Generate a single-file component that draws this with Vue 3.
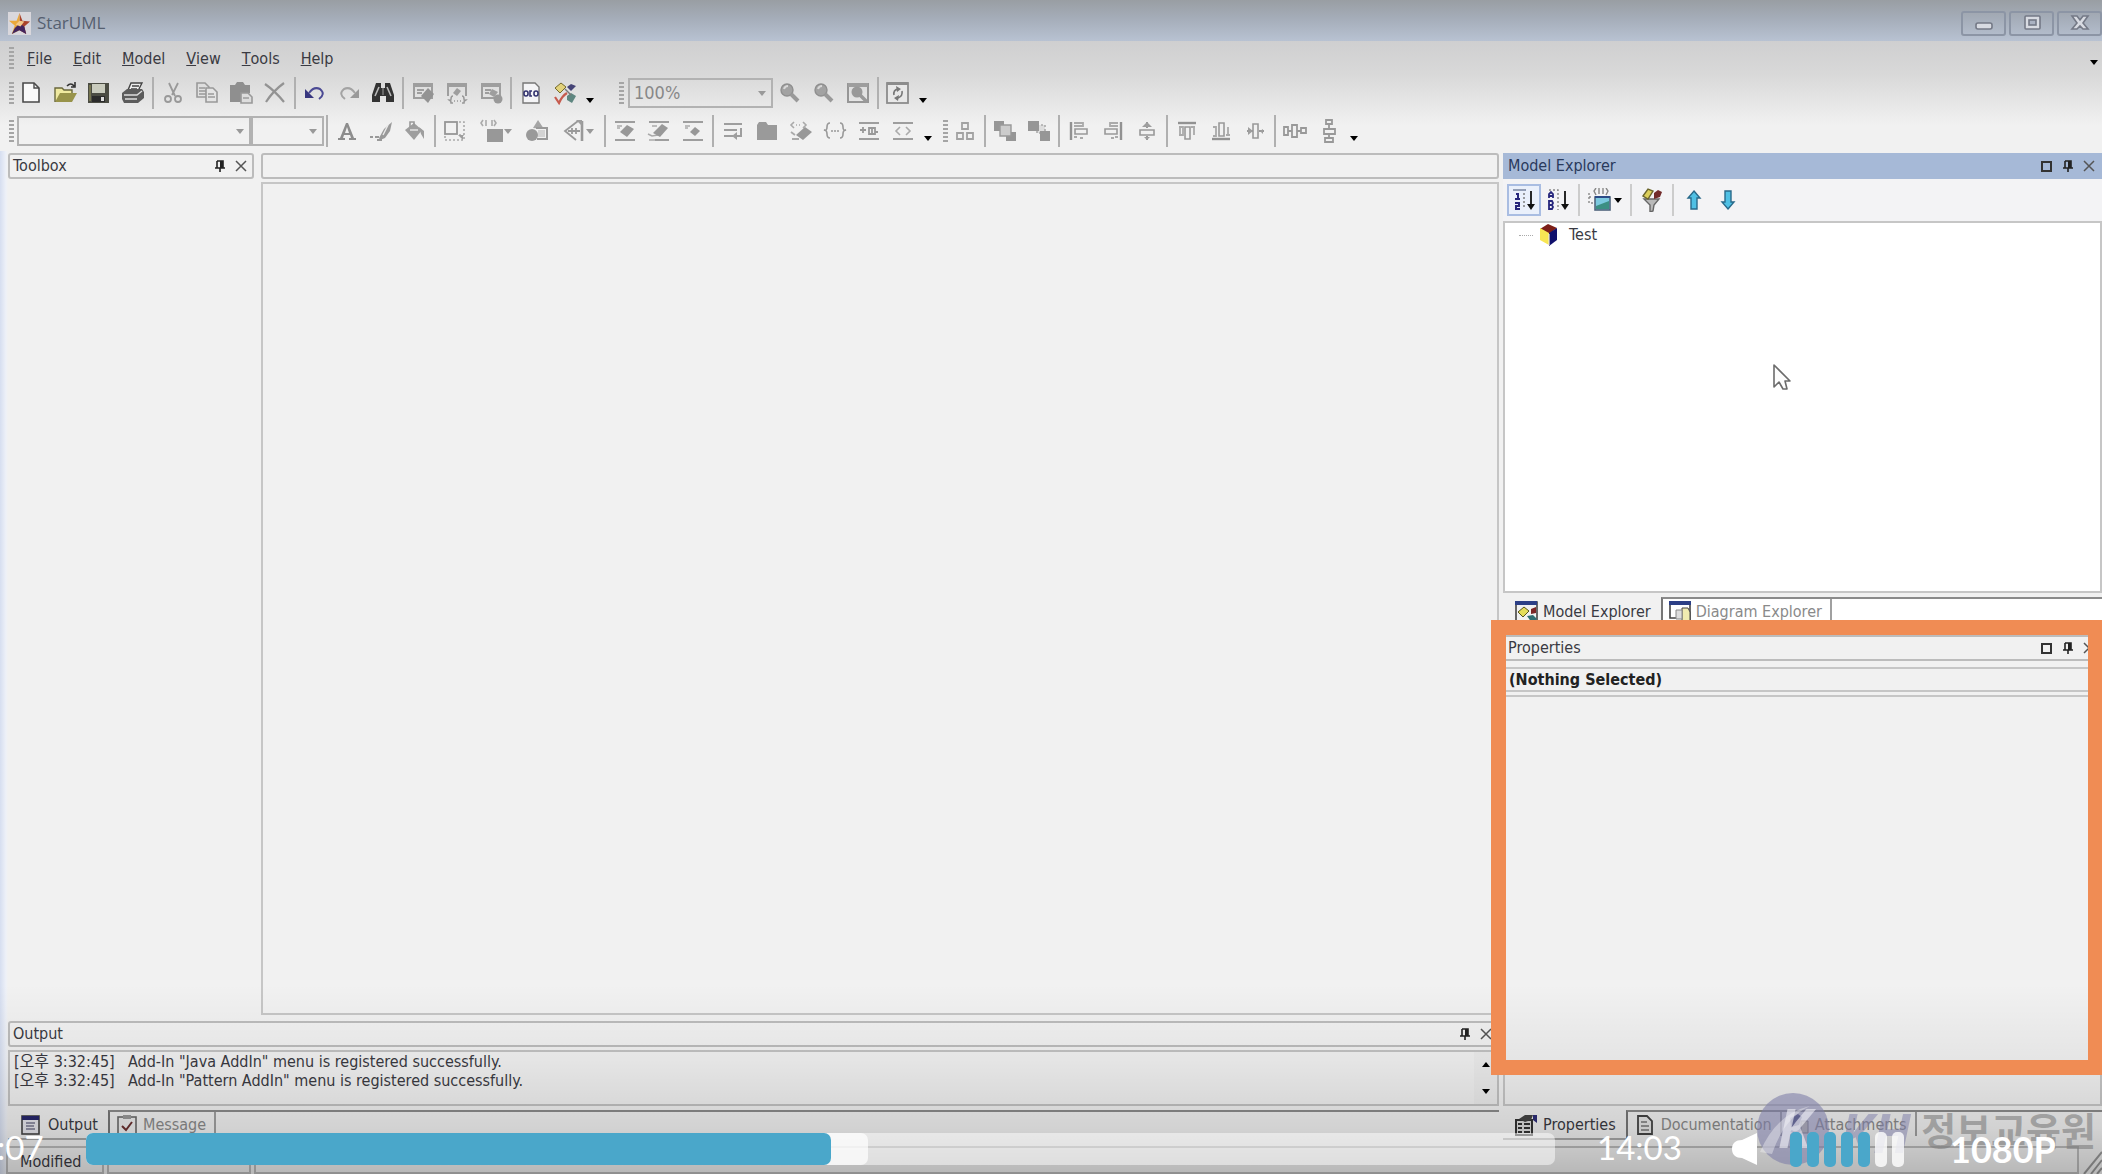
<template>
  <div class="app">
    <header class="chrome">
      <div class="titlebar">
        <svg class="logo" viewBox="0 0 24 24">
          <rect width="24" height="24" fill="#d9d7dc" />
          <path d="M12 1l3 8 8 1-6 5 2 8-7-4z" fill="#a9432c" />
          <path d="M12 1l-3 8-8 0 6 5-3 9 8-4z" fill="#eaa93b" />
          <path d="M12 12l5 3 2 8-7-4-8 4 3-6z" fill="#43265e" />
          <path d="M12 9l5 1-4 5-5-2z" fill="#f2c98a" />
        </svg>
        <h1>StarUML</h1>
        <div class="window-buttons">
          <button v-for="name in ['minimize', 'restore', 'exit']" :key="name" :aria-label="name">
            <svg class="icon" viewBox="0 0 24 24" v-html="icons[name]" />
          </button>
        </div>
      </div>

      <nav class="menubar">
        <i class="handle" />
        <button v-for="item in menus" :key="item"><u>{{ item[0] }}</u>{{ item.slice(1) }}</button>
        <button class="more" aria-label="Menu options">
          <svg class="caret" viewBox="0 0 10 6"><path d="M0 0h10L5 6z" /></svg>
        </button>
      </nav>

      <div v-for="(bar, row) in toolbars" :key="row" class="toolbar" :class="'row-' + row">
        <template v-for="(item, index) in bar" :key="index">
          <i v-if="item === '#'" class="handle" />
          <i v-else-if="item === '|'" class="separator" />
          <button v-else-if="item === 'v'" class="more" aria-label="More buttons">
            <svg class="caret" viewBox="0 0 10 6"><path d="M0 0h10L5 6z" /></svg>
          </button>
          <span v-else-if="item.combo" class="combo" :class="item.combo">
            <select :aria-label="item.combo">
              <option>{{ item.value }}</option>
            </select>
            <svg class="caret" viewBox="0 0 10 6"><path d="M0 0h10L5 6z" /></svg>
          </span>
          <button v-else class="tool" :class="{ drop: item.endsWith('+') }" :aria-label="item.replace('+', '')">
            <svg class="icon" viewBox="0 0 24 24" v-html="icons[item.replace('+', '')]" />
            <svg v-if="item.endsWith('+')" class="caret" viewBox="0 0 10 6"><path d="M0 0h10L5 6z" /></svg>
          </button>
        </template>
      </div>
    </header>

    <main class="workspace">
      <div class="left">
        <div class="editor">
          <aside class="toolbox">
            <div class="panel-head">
              <h2>Toolbox</h2>
              <button aria-label="Pin"><svg class="mini" viewBox="0 0 14 14" v-html="icons.pin" /></button>
              <button aria-label="Close"><svg class="mini" viewBox="0 0 14 14" v-html="icons.close" /></button>
            </div>
          </aside>
          <section class="document">
            <div class="panel-head" />
            <div class="canvas" />
          </section>
        </div>

        <section class="output">
          <div class="panel-head">
            <h2>Output</h2>
            <button aria-label="Pin"><svg class="mini" viewBox="0 0 14 14" v-html="icons.pin" /></button>
            <button aria-label="Close"><svg class="mini" viewBox="0 0 14 14" v-html="icons.close" /></button>
          </div>
          <div class="log">
            <ul>
              <li v-for="line in log" :key="line"><time>[오후 3:32:45]</time>{{ line }}</li>
            </ul>
            <div class="scroll">
              <button aria-label="Scroll up"><svg class="caret" viewBox="0 0 10 6"><path d="M0 6h10L5 0z" /></svg></button>
              <button aria-label="Scroll down"><svg class="caret" viewBox="0 0 10 6"><path d="M0 0h10L5 6z" /></svg></button>
            </div>
          </div>
          <div class="tabs">
            <button class="tab active"><svg class="icon" viewBox="0 0 24 24" v-html="icons.output" />Output</button>
            <div class="rest">
              <button class="tab"><svg class="icon" viewBox="0 0 24 24" v-html="icons.message" />Message</button>
            </div>
          </div>
        </section>
      </div>

      <div class="right">
        <section class="explorer">
          <div class="panel-head focused">
            <h2>Model Explorer</h2>
            <button aria-label="Maximize"><svg class="mini" viewBox="0 0 14 14" v-html="icons.square" /></button>
            <button aria-label="Pin"><svg class="mini" viewBox="0 0 14 14" v-html="icons.pin" /></button>
            <button aria-label="Close"><svg class="mini" viewBox="0 0 14 14" v-html="icons.close" /></button>
          </div>
          <div class="tree-tools">
            <template v-for="(item, index) in treeTools" :key="index">
              <i v-if="item === '|'" class="separator" />
              <button v-else class="tool" :class="{ pressed: item === 'sortNumber', drop: item.endsWith('+') }" :aria-label="item.replace('+', '')">
                <svg class="icon" viewBox="0 0 24 24" v-html="icons[item.replace('+', '')]" />
                <svg v-if="item.endsWith('+')" class="caret" viewBox="0 0 10 6"><path d="M0 0h10L5 6z" /></svg>
              </button>
            </template>
          </div>
          <div class="tree">
            <div class="node">
              <i class="branch" />
              <svg class="icon" viewBox="0 0 24 24" v-html="icons.cube" />
              <span>Test</span>
            </div>
            <svg class="cursor" viewBox="0 0 18 28">
              <path d="M1 2v22l5-5 4 7h4l-2-8h5z" fill="#fdfdfd" stroke="#6c6c6c" stroke-width="1.6" stroke-linejoin="round" />
            </svg>
          </div>
          <div class="tabs">
            <button class="tab active"><svg class="icon" viewBox="0 0 24 24" v-html="icons.modelTab" />Model Explorer</button>
            <div class="rest">
              <button class="tab"><svg class="icon" viewBox="0 0 24 24" v-html="icons.diagramTab" />Diagram Explorer</button>
            </div>
          </div>
        </section>

        <section class="properties">
          <div class="panel-head">
            <h2>Properties</h2>
            <button aria-label="Maximize"><svg class="mini" viewBox="0 0 14 14" v-html="icons.square" /></button>
            <button aria-label="Pin"><svg class="mini" viewBox="0 0 14 14" v-html="icons.pin" /></button>
            <button aria-label="Close"><svg class="mini" viewBox="0 0 14 14" v-html="icons.close" /></button>
          </div>
          <p class="selection">(Nothing Selected)</p>
          <div class="grid" />
          <div class="tabs">
            <button class="tab active"><svg class="icon" viewBox="0 0 24 24" v-html="icons.propertiesTab" />Properties</button>
            <div class="rest">
              <button class="tab"><svg class="icon" viewBox="0 0 24 24" v-html="icons.documentTab" />Documentation</button>
              <button class="tab"><svg class="icon" viewBox="0 0 24 24" v-html="icons.attachTab" />Attachments</button>
            </div>
          </div>
          <div class="highlight" />
        </section>
      </div>
    </main>

    <footer class="statusbar">
      <span class="cell state">Modified</span>
      <span class="cell" />
      <span class="cell wide" />
      <svg class="grip" viewBox="0 0 20 28"><path d="M2 28L20 6M9 28L20 14M15 28L20 22" stroke="#999" stroke-width="2" /></svg>
    </footer>

    <div class="shade" />

    <div class="watermark">
      <svg viewBox="0 0 160 78">
        <circle cx="37" cy="39" r="36" fill="#7f7fa8" fill-opacity=".6" />
        <path d="M4 62q16-38 50-46-26 12-38 48z" fill="#f4f4f8" fill-opacity=".4" />
        <text x="22" y="58" class="mark white">K</text>
        <text x="84" y="63" class="mark">KH</text>
      </svg>
      <span>정보교육원</span>
    </div>

    <div class="player">
      <span class="elapsed">:07</span>
      <div class="seek">
        <i class="buffered" :style="{ width: buffered + '%' }" />
        <i class="played" :style="{ width: played + '%' }" />
        <input v-model="played" type="range" min="0" max="100" step="0.1" aria-label="Seek">
      </div>
      <span class="total">14:03</span>
      <button class="mute" aria-label="Mute">
        <svg viewBox="0 0 26 34"><path d="M10 8L25 1v32L10 26C4 26 0 23 0 17s4-9 10-9z" fill="#fff" /></svg>
      </button>
      <div class="volume">
        <button v-for="n in 7" :key="n" :class="{ on: n <= volume }" :aria-label="'Volume ' + n" @click="volume = n" />
      </div>
      <button class="quality">1080P</button>
    </div>
  </div>
</template>

<script setup>
import { ref } from 'vue'

const played = ref(50.7)
const buffered = 53.2
const volume = ref(5)

const menus = ['File', 'Edit', 'Model', 'View', 'Tools', 'Help']

// '#' is a drag handle, '|' a separator, 'v' the overflow arrow, a trailing '+' a drop-down
const toolbars = [
  [
    '#', 'new', 'open', 'save', 'print', '|', 'cut', 'copy', 'paste', 'delete', '|',
    'undo', 'redo', 'find', '|', 'selectModel', 'selectBrackets', 'selectDiagram', '|',
    'ocl', 'verify', 'v', '#', { combo: 'zoom', value: '100%' },
    'zoomIn', 'zoomOut', 'fit', '|', 'refresh', 'v',
  ],
  [
    '#', { combo: 'font', value: '' }, { combo: 'size', value: '' }, '|',
    'fontColor', 'lineColor', 'fill', '|', 'autoSize', 'stereotype+', 'shapes', 'lineStyle+', '|',
    'attributes', 'operations', 'literals', '|',
    'wrap', 'folder', 'signature', 'braces', 'visibility', 'namespace', 'v', '#',
    'layout', '|', 'front', 'back', '|', 'alignLeft', 'alignRight', 'alignCenter', '|',
    'alignTop', 'alignBottom', 'alignMiddle', '|', 'spaceH', 'spaceV', 'v',
  ],
]

const treeTools = ['sortNumber', 'sortName', '|', 'treeView+', '|', 'filter', '|', 'up', 'down']

const log = [
  'Add-In "Java AddIn" menu is registered successfully.',
  'Add-In "Pattern AddIn" menu is registered successfully.',
]

const line = (d, color = '#9e9e9e', width = 2) =>
  `<path d="${d}" fill="none" stroke="${color}" stroke-width="${width}"/>`
const solid = (d, color = '#9e9e9e') => `<path d="${d}" fill="${color}"/>`

const lens = '<circle cx="9" cy="9" r="6" fill="#a2a2a2" stroke="#8f8f8f" stroke-width="1.4"/>' + line('M13 13l7 7', '#999', 4) + line('M6 8q1-3 4-3', '#d8d8d8')
const frame = solid('M2 2h20v4H2z') + line('M3 3v14h18V3')

const icons = {
  minimize: '<rect x="4" y="12" width="16" height="6" rx="2" fill="#d8dbe2" stroke="#747986" stroke-width="1.6"/>',
  restore: '<rect x="5" y="5" width="15" height="13" rx="1" fill="#d8dbe2" stroke="#747986" stroke-width="1.6"/><rect x="9" y="9" width="7" height="5" fill="#aab2c2" stroke="#747986" stroke-width="1.6"/>',
  exit: '<path d="M4 5h5l3 4 3-4h5l-5 7 5 6h-5l-3-3-3 3H4l5-6z" fill="#d8dbe2" stroke="#747986" stroke-width="1.6"/>',
  new: '<path d="M4 2h11l5 5v14H4z" fill="#fafafa" stroke="#4a4a4a" stroke-width="1.6"/>' + line('M15 2v5h5', '#4a4a4a', 1.4),
  open: solid('M2 7h7l2 2h8v4H9L2 21z', '#efe9a0') + solid('M7 12h17l-5 9H2z', '#98934a') + line('M2 21V7h7l2 2h8v3', '#69673c', 1.4) + line('M14 5q4-4 7 0M22 1v5h-4', '#333', 1.6),
  save: solid('M1 2h21v20H1z', '#4b4c43') + solid('M5 3h13v9H5z', '#c9cbbd') + solid('M5 15h13v6H5z', '#2b2b2b') + solid('M14 16h3v4h-3z', '#ddd') + line('M3 4v16', '#838254', 1.5),
  print: solid('M7 8L10 2h12l-4 8z', '#eee') + line('M7 9l3-7h11l-4 8M11 5h7M10 8h6', '#444', 1.4) + solid('M1 12l5-4h15l2 3v6l-6 5H3l-2-4z', '#5c5c5c') + line('M3 14h13l5-4M4 18h12', '#ddd', 1.4),
  cut: line('M8 2l6 13M17 2l-6 12', '#999', 1.8) + '<circle cx="7" cy="18" r="3" fill="none" stroke="#999" stroke-width="1.8"/><circle cx="17" cy="18" r="3" fill="none" stroke="#999" stroke-width="1.8"/>',
  copy: line('M2 2h8l4 4v10H2zM4 7h6M4 10h8M4 13h8', '#999', 1.6) + '<path d="M11 7h7l4 4v10H11z" fill="#e4e4e4" stroke="#999" stroke-width="1.6"/>' + line('M13 13h6M13 16h7', '#999', 1.4),
  paste: solid('M1 4h5l2-3h6l2 3h5v8h-9v9H1z', '#8f8f8f') + '<path d="M12 12h7l4 4v6H12z" fill="#ddd" stroke="#999" stroke-width="1.6"/>' + line('M14 17h6', '#999', 1.4),
  delete: line('M2 3Q12 10 21 21M21 2Q10 10 3 21', '#939393', 2.2),
  undo: line('M6 12q5-7 11-4 6 5-1 10', '#4b4a94', 2) + solid('M2 8v9h9z', '#38377f'),
  redo: line('M18 12q-5-7-11-4-6 5 1 10', '#a3a3a3', 2) + solid('M22 8v9h-9z', '#999'),
  find: solid('M5 2h5v5h4V2h5l4 12v7h-8v-6H9v6H1v-7z', '#333') + line('M8 6L4 15M16 6l4 9', '#bbb', 1.6) + line('M12 7v7', '#777', 1.6),
  selectModel: frame + line('M6 9h7M6 12h5') + solid('M17 7l6 6-6 9-7-7z', '#939393'),
  selectBrackets: solid('M2 2h20v4H2z') + line('M3 3v12M21 3v12') + solid('M12 7l4 3-4 5-4-3z') + line('M8 15q-2 0-2 3t-2 1q2 0 2 3h2M17 15q2 0 2 3t2 1q-2 0-2 3h-2M9 20h1M12 20h1M15 20h1', '#999', 1.5),
  selectDiagram: frame + line('M6 9h6M6 12h4') + solid('M13 8l6 3-4 5-5-3z') + '<circle cx="19" cy="18" r="4.5" fill="#999"/>',
  ocl: '<path d="M4 2h12l4 4v16H4z" fill="#f4f4f6" stroke="#777" stroke-width="1.4"/><rect x="5" y="10" width="4" height="5" rx="2" fill="none" stroke="#33336f" stroke-width="1.6"/><rect x="15" y="10" width="4" height="5" rx="2" fill="none" stroke="#33336f" stroke-width="1.6"/>' + line('M13 10h-2v5h2', '#33336f', 1.6),
  verify: '<path d="M2 7l6-5 5 4-6 6z" fill="#e2d27b" stroke="#74692b"/>' + solid('M14 6l4-3 5 2-5 5z', '#454476') + solid('M14 15l4-3 5 3-4 7-5-3z', '#5e8680') + line('M2 16l4 6q3-7 8-10', '#c65b4e', 2.2) + line('M12 8l6 6', '#777', 1.4),
  zoomIn: lens,
  zoomOut: lens,
  fit: '<rect x="2" y="3" width="20" height="18" fill="none" stroke="#969696" stroke-width="2"/>' + solid('M2 2h20v4H2z') + '<circle cx="11" cy="11" r="5.5" fill="#999"/>' + line('M14 14l7 7', '#999', 3.5),
  refresh: '<rect x="1" y="2" width="21" height="20" fill="#e8e8e8" stroke="#8c8c8c" stroke-width="1.8"/>' + solid('M1 1h21v3H1z', '#8c8c8c') + line('M8 14q-1-5 4-6M16 10q1 5-4 7', '#777', 1.6) + solid('M10 5l5 3-4 3zM13 14l-5 3 4 3z', '#777'),
  fontColor: solid('M3 21v-2h2L11 4h2l6 15h2v2h-7v-2h2l-1-3H9l-1 3h2v2zM10 14h4l-2-6z', '#8d8d8d'),
  lineColor: solid('M10 19l5-9 8-7-2 9-5 7-5 2z', '#999') + line('M19 6l-5 10', '#e9e9e9', 1.4) + line('M1 18h3M6 18h4M8 21h5', '#999', 2),
  fill: solid('M2 11l9-7 8 7-8 10z') + line('M7 8V3h4v4', '#999', 1.6) + solid('M16 8l5 4v8l-3-5z') + line('M7 11h8', '#e8e8e8', 1.4),
  autoSize: '<rect x="2" y="3" width="12" height="12" fill="none" stroke="#969696" stroke-width="1.8"/><path d="M16 3h5v18H2v-4M16 16h5" fill="none" stroke="#aaa" stroke-width="1.6" stroke-dasharray="2 2"/>' + solid('M15 16h5v5z'),
  stereotype: solid('M7 10h16v13H7z', '#989898') + line('M3 1L1 4l2 3M6 1v6M12 1v6M14 1l2 3-2 3', '#aaa', 1.6),
  shapes: solid('M8 9l5-8 6 9z', '#a5a5a5') + line('M11 9h11v11H12', '#999', 2) + solid('M13 11h7v7h-7z', '#d3d3d3') + '<circle cx="7" cy="16" r="6" fill="#999"/>',
  lineStyle: line('M16 2L3 12l11 9', '#999', 1.8) + line('M20 2v20', '#999', 2.6) + line('M6 12h12M10 9v6M14 9v6', '#999', 1.8) + solid('M14 1h6v6z'),
  attributes: line('M2 3h20M2 21h20') + line('M4 7h5M4 9h3', '#aaa', 1.4) + solid('M14 6l7 4-7 8-7-5z', '#989898'),
  operations: line('M2 3h20M8 21h14') + line('M5 7h5M1 15l4 2 6-1M2 21h6', '#aaa', 1.6) + solid('M15 5l6 4-8 9-7-4z', '#989898'),
  literals: line('M2 3h20M2 21h20') + line('M4 7h5M4 9h3', '#aaa', 1.4) + solid('M14 8l5 4-5 5-5-4z', '#989898'),
  wrap: line('M3 5h18M3 11h13M3 17h9M20 9v8h-5') + solid('M16 13v8l-5-4z'),
  folder: solid('M2 6l2-3h7l2 3h9v15H2z', '#9a9a9a'),
  signature: line('M5 3L2 6l3 3M14 3l3 3-3 3M7 6h1M10 6h1', '#aaa', 1.6) + solid('M16 8l7 5-9 8-7-5z', '#989898') + line('M2 13l4 3M3 20h7', '#aaa', 1.8),
  braces: line('M7 4q-3 0-3 4t-3 3q3 0 3 4t3 4M17 4q3 0 3 4t3 3q-3 0-3 4t-3 4M8 12h2M11 12h2M14 12h2', '#999', 1.6),
  visibility: line('M2 4h20M2 20h20') + line('M3 11h6M6 8v6M12 9h6v6h-6zM15 8v8M18 13h3', '#999', 1.8),
  namespace: line('M2 4h20M2 20h20') + line('M9 8l-4 4 4 4M15 8l4 4-4 4', '#aaa', 1.6),
  layout: line('M9 4h6v6H9zM4 14h6v6H4zM14 14h6v6h-6z', '#a2a2a2', 1.8),
  front: solid('M1 2h10v10H1zM13 13h10v9H13z', '#969696') + '<path d="M7 6h11v11H7z" fill="#ccc" stroke="#999" stroke-width="1.4"/>',
  back: '<path d="M10 6h8v8h-8z" fill="#ddd" stroke="#aaa" stroke-width="1.6" stroke-dasharray="2 2"/>' + solid('M1 2h11v10H1zM13 12h10v10H13z', '#969696'),
  alignLeft: line('M4 3v18', '#929292', 2.4) + line('M7 4h9v3H7M7 18h3M13 19h3', '#aaa', 1.8) + line('M8 10h12v5H8z', '#999', 1.6),
  alignRight: line('M20 3v18', '#929292', 2.4) + line('M17 4H9v3h8M17 18h-3M13 19h-3', '#aaa', 1.8) + line('M16 10H4v5h12z', '#999', 1.6),
  alignCenter: line('M12 3v6M12 17v4', '#999', 2) + solid('M7 8l5-5 5 5z') + solid('M9 18h6l-3 3z') + line('M5 11h14v5H5z', '#999', 1.6),
  alignTop: line('M3 4h18', '#929292', 2.4) + line('M5 8v8M4 8h4v8H4M19 8v8M16 8h4', '#aaa', 1.8) + line('M10 8h5v12h-5z', '#999', 1.6),
  alignBottom: line('M3 20h18', '#929292', 2.4) + line('M4 8h3v9H4M19 8v8M17 16h4', '#aaa', 1.8) + line('M10 4h5v13h-5z', '#999', 1.6),
  alignMiddle: line('M4 12h6M16 12h5', '#999', 2) + solid('M5 8l5 4-5 4zM20 10v5l-3-3z') + line('M10 5h5v14h-5z', '#999', 1.6),
  spaceH: line('M1 8h4v8H1zM9 6h5v12H9zM18 9h5v5h-5zM5 12h4M14 12h4', '#999', 1.8),
  spaceV: line('M9 1h6v4H9zM7 10h11v5H7zM8 19h8v4H8zM12 5v5M12 15v4', '#999', 1.8),
  pin: line('M4 2h6v7M4 2v7M2 9h10M7 9v4', '#222', 1.6) + solid('M7 2h3v7H7z', '#222'),
  close: line('M2 2l10 10M12 2L2 12', '#555', 1.5),
  square: line('M2 3h9v9H2z', '#333', 2),
  output: '<rect x="3" y="3" width="17" height="18" fill="#e6e6ec" stroke="#444" stroke-width="1.6"/>' + solid('M3 3h17v4H3z', '#28286c') + line('M7 10h9M7 13h8M7 16h9', '#77778f', 1.4),
  message: '<rect x="3" y="4" width="18" height="18" fill="#ededed" stroke="#6a6a6a" stroke-width="1.6"/>' + solid('M8 2h8v4H8z', '#999') + line('M7 13l4 4 6-8', '#6b3030', 2),
  sortNumber: line('M1 2h13', '#6f7b98', 1.4) + line('M4 6h2v5M3 11h5M3 15h4v3H4v3h4', '#26267c', 2) + '<path d="M12 5v16" stroke="#777" stroke-width="1.4" stroke-dasharray="2 2"/>' + line('M19 3v14', '#111', 1.8) + solid('M15 16h8l-4 6z', '#111'),
  sortName: line('M3 10V6l2-2 2 2v4M3 8h4M3 13h3l1 2-1 2H3zM3 17h3l1 2-1 2H3v-7', '#26267c', 1.8) + '<path d="M3 2h9v20" fill="none" stroke="#888" stroke-width="1.4" stroke-dasharray="2 2"/>' + line('M19 3v14', '#111', 1.8) + solid('M15 16h8l-4 6z', '#111'),
  treeView: '<path d="M1 5v10h5M1 9h4" fill="none" stroke="#888" stroke-width="1.4" stroke-dasharray="2 2"/>' + line('M8 0L6 3l2 4M11 0v6M15 0v6M18 0l2 3-2 4', '#888', 1.4) + '<rect x="7" y="9" width="15" height="13" fill="#7cc9df" stroke="#51657d" stroke-width="1.6"/>' + solid('M8 18l13-5v8H8z', '#3c8f83') + line('M7 9h15', '#2c4a86', 2),
  filter: '<path d="M4 11h15l-5 6-1 6-3 1v-7z" fill="#b9b9b9" stroke="#666" stroke-width="1.4"/><path d="M3 8l5-7 5 2-5 8z" fill="#dccf5b" stroke="#6b652b" stroke-width="1.4"/>' + solid('M14 5l4-3 4 2-2 5-6 2z', '#722b2b'),
  up: '<path d="M12 3l6 7h-3v11H9V10H6z" fill="#4fc0e4" stroke="#28698a" stroke-width="1.4"/>',
  down: '<path d="M12 21l6-7h-3V3H9v11H6z" fill="#4fc0e4" stroke="#28698a" stroke-width="1.4"/>',
  cube: solid('M11 1l9 4-8 6-9-5z', '#7c1e17') + solid('M3 5l9 5v12l-9-5z', '#f8e653') + solid('M12 10l8-5v12l-8 6z', '#10106c') + line('M12 11v11', '#efe9d2', 1.2),
  modelTab: line('M1 2h22v19H2V3', '#444', 1.6) + solid('M1 1h22v4H1z', '#2c3f86') + '<path d="M4 12l6-5 5 4-6 6z" fill="#e5dd5a" stroke="#55531f"/>' + solid('M17 9l5-2v6l-5 1z', '#7b2525') + solid('M13 16l6-1 4 4-5 4z', '#2f6d72'),
  diagramTab: line('M2 2h20v20M2 2v16h8', '#444', 1.6) + solid('M1 1h22v4H1z', '#2c3f86') + '<path d="M14 8h6l2 4v9h-8z" fill="#f0ebb0" stroke="#444"/><path d="M8 10h6v9H8z" fill="#ddd" stroke="#888"/>',
  propertiesTab: '<rect x="2" y="7" width="16" height="15" fill="#ddd" stroke="#333" stroke-width="2"/>' + line('M4 11h4M10 11h6M4 15h4M10 15h6M4 19h4M10 19h6', '#333', 1.8) + solid('M5 6l6-4h8l-2 5-6 2z', '#444') + solid('M19 2h4v8l-4-3z', '#2e2e78'),
  documentTab: '<path d="M5 3h9l5 5v13H5z" fill="#e6e6e6" stroke="#444" stroke-width="1.8"/>' + line('M8 9h6M8 13h8M8 17h8', '#777', 1.4),
  attachTab: solid('M3 5l8-4 4 3-3 8-8 2z', '#46467c') + line('M6 12q0-8 7-8M4 18q6 4 11-3', '#333c70', 2.4) + '<path d="M14 8h7v12h-7z" fill="#d6d2b8" stroke="#777"/>',
}
</script>

<style>
body {
  background: #f1f1f1;
}
</style>

<style scoped>
.app {
  position: relative;
  display: flex;
  flex-direction: column;
  min-height: 100vh;
  overflow: hidden;
  background: linear-gradient(90deg, #d6def0 0, #eef1f8 6px, #f1f1f1 8px);
  font-family: 'DejaVu Sans Condensed', 'Noto Sans CJK KR', sans-serif;
  font-size: 16px;
  line-height: 20px;
  color: #3a3a42;
}

button {
  display: flex;
  align-items: center;
  justify-content: center;
  padding: 0;
  border: 0;
  background: none;
  font: inherit;
  color: inherit;
}

h1,
h2,
p,
ul {
  margin: 0;
  padding: 0;
  font: inherit;
  list-style: none;
}

svg {
  display: block;
}

.icon {
  flex: none;
  width: 24px;
  height: 24px;
}

.mini {
  width: 14px;
  height: 14px;
}

.caret {
  flex: none;
  width: 8px;
  height: 5px;
}

/* window chrome */

.chrome {
  background: linear-gradient(#cfcfd0 41px, #d9d9d9 76px, #f1f1f1 125px);
}

.titlebar {
  display: flex;
  align-items: center;
  height: 41px;
  padding: 5px 0 0 8px;
  box-sizing: border-box;
  background: linear-gradient(#999ea3, #a5adb9 45%, #b8c2d2);
}

.logo {
  width: 23px;
  height: 23px;
}

.titlebar h1 {
  flex: 1;
  margin-left: 6px;
  font-family: 'Open Sans', sans-serif;
  font-size: 17px;
  color: #566070;
}

.window-buttons {
  display: flex;
  gap: 3px;
}

.window-buttons button {
  width: 45px;
  height: 25px;
  border: 2px solid #8c95a5;
  border-radius: 3px;
  box-sizing: border-box;
}

.menubar {
  display: flex;
  align-items: center;
  height: 34px;
  padding-left: 9px;
}

.menubar button {
  padding: 2px 11px 0 10px;
}

.menubar .handle {
  margin-right: 3px;
}

.menubar .more {
  margin-left: auto;
  padding: 8px 4px 0;
}

.handle {
  flex: none;
  width: 5px;
  height: 22px;
  background: repeating-linear-gradient(#a5a5a5 0 2px, transparent 2px 4px);
}

.toolbar {
  display: flex;
  align-items: center;
  height: 36px;
  padding-left: 9px;
}

.row-1 {
  height: 40px;
}

.tool {
  width: 34px;
  height: 32px;
}

.tool.drop {
  width: 48px;
}

.toolbar .drop .caret {
  fill: #999;
}

.separator {
  flex: none;
  width: 2px;
  height: 32px;
  margin: 0 2px;
  background: #b0b0b0;
}

.toolbar .more {
  width: 16px;
  margin: 14px 21px 0 0;
}

.row-1 .more {
  margin-right: 7px;
}

.combo {
  position: relative;
  flex: none;
  height: 30px;
}

.combo select {
  width: 100%;
  height: 100%;
  padding: 0 4px;
  border: 2px solid #b2b2b2;
  border-radius: 0;
  background: transparent;
  appearance: none;
  font: inherit;
  font-size: 18px;
  color: #888;
}

.combo .caret {
  position: absolute;
  top: 13px;
  right: 7px;
  fill: #999;
  pointer-events: none;
}

.combo.zoom {
  width: 145px;
  margin-left: 4px;
}

.combo.font {
  width: 234px;
  margin-left: 3px;
}

.combo.size {
  width: 73px;
}

/* panels */

.workspace {
  display: flex;
  flex: 1;
  gap: 4px;
  padding: 2px 0 6px 8px;
}

.left,
.right,
.explorer,
.properties,
.output,
.document {
  display: flex;
  flex-direction: column;
}

.left {
  flex: 1;
  gap: 6px;
}

.editor {
  display: flex;
  flex: 1;
  gap: 7px;
}

.toolbox {
  width: 246px;
}

.panel-head {
  display: flex;
  align-items: center;
  gap: 7px;
  height: 26px;
  padding: 0 4px 0 3px;
  border: 2px solid #bcbcbc;
  border-radius: 3px;
  box-sizing: border-box;
}

.panel-head h2 {
  flex: 1;
}

.document {
  flex: 1;
  gap: 3px;
}

.canvas {
  flex: 1;
  border: 2px solid #c6c6c6;
}

.log {
  display: flex;
  justify-content: space-between;
  height: 56px;
  margin-top: 3px;
  border: 2px solid #c2c2c2;
  box-sizing: border-box;
}

.log ul {
  padding-left: 4px;
}

.log li {
  height: 19px;
  line-height: 20px;
}

.log time {
  display: inline-block;
  width: 114px;
}

.scroll {
  display: flex;
  flex-direction: column;
  justify-content: space-between;
  width: 23px;
  padding: 10px 0;
  box-sizing: border-box;
  background: #ececec;
}

.tabs {
  display: flex;
  flex: none;
  height: 30px;
  margin-top: 4px;
}

.tab {
  gap: 5px;
  padding: 2px 10px 0 11px;
}

.tab.active {
  height: 30px;
  border-bottom: 2px solid #a9a9a9;
  box-sizing: border-box;
}

.rest {
  display: flex;
  flex: 1;
  border-top: 2px solid #8b8b8b;
  border-left: 2px solid #777;
}

.rest .tab {
  gap: 4px;
  height: 24px;
  padding: 2px 8px 0 5px;
  border-right: 2px solid #a0a0a0;
  color: #8a8a8a;
}

.right {
  gap: 8px;
  width: 599px;
}

.explorer {
  flex: 474 1 0;
}

.properties {
  position: relative;
  flex: 504 1 0;
}

.focused {
  border-color: #a6b9d7;
  border-radius: 0;
  background: #a6b9d7;
  color: #2a3a5c;
}

.tree-tools {
  display: flex;
  align-items: center;
  height: 42px;
  padding-left: 4px;
  background: #f3f3f5;
}

.tree-tools .drop {
  gap: 2px;
  width: 44px;
}

.tree-tools .separator {
  margin: 0 3px;
  background: #ccc;
}

.pressed {
  border: 2px solid #a9bde2;
  background: #eaf0fb;
  box-sizing: border-box;
}

.tree {
  position: relative;
  flex: 1;
  border: 2px solid #c6c6c6;
  background: #fff;
}

.node {
  display: flex;
  align-items: center;
  height: 24px;
  padding-left: 14px;
}

.branch {
  width: 14px;
  margin-right: 4px;
  border-top: 1px dotted #aaa;
}

.node span {
  margin-left: 8px;
}

.cursor {
  position: absolute;
  top: 140px;
  left: 268px;
  width: 18px;
  height: 28px;
}

.explorer .rest {
  background: #fff;
}

.selection {
  margin-top: 6px;
  padding: 0 4px;
  border: 2px solid #c6c6c6;
  font-weight: bold;
  line-height: 21px;
  color: #222;
}

.grid {
  flex: 1;
  margin-top: 3px;
  border: 2px solid #c6c6c6;
}

/* stays above the shade so its colour is even all round */
.highlight {
  position: absolute;
  z-index: 1;
  inset: -15px 0 65px -12px;
  border: 15px solid #f08c54;
  border-right-width: 14px;
  pointer-events: none;
}

.statusbar {
  display: flex;
  gap: 3px;
  height: 28px;
  padding-left: 6px;
}

.cell {
  width: 140px;
  border: 2px solid #bcbcbc;
}

.state {
  width: 82px;
  padding-left: 12px;
  line-height: 28px;
}

.wide {
  flex: 1;
}

.grip {
  width: 20px;
}

/* video player overlay */

.shade {
  position: absolute;
  inset: auto 0 0;
  height: 190px;
  background: linear-gradient(transparent, rgba(0, 0, 0, 0.05) 40%, rgba(0, 0, 0, 0.13) 76%, rgba(0, 0, 0, 0.24));
  pointer-events: none;
}

.watermark {
  position: absolute;
  right: 6px;
  bottom: 6px;
  display: flex;
  align-items: center;
  gap: 5px;
  font-family: 'Noto Sans CJK KR', sans-serif;
  font-size: 38px;
  font-weight: bold;
  line-height: 60px;
  color: rgba(125, 125, 125, 0.6);
  pointer-events: none;
}

.watermark svg {
  width: 160px;
  height: 78px;
}

.mark {
  font-family: 'Open Sans', sans-serif;
  font-size: 54px;
  font-style: italic;
  font-weight: bold;
  fill: rgba(124, 124, 168, 0.5);
}

.mark.white {
  fill: rgba(244, 244, 248, 0.6);
}

.player {
  position: absolute;
  inset: auto 0 9px;
  display: flex;
  align-items: center;
  height: 32px;
  font-family: Lato, sans-serif;
  font-size: 33px;
  line-height: 28px;
  color: #fff;
}

.elapsed,
.total {
  height: 32px;
}

.elapsed {
  width: 89px;
  margin-left: -3px;
}

.seek {
  position: relative;
  flex: 1;
  height: 32px;
  border-radius: 7px;
  background: rgba(255, 255, 255, 0.5);
}

.seek i,
.seek input {
  position: absolute;
  inset: 0 auto 0 0;
  border-radius: 7px;
}

.seek input {
  width: 100%;
  margin: 0;
  opacity: 0;
}

.buffered {
  background: rgba(255, 255, 255, 0.7);
}

.played {
  background: #4aa7ca;
}

.total {
  width: 135px;
  padding-left: 42px;
}

.mute svg {
  width: 26px;
  height: 34px;
}

.volume {
  display: flex;
  gap: 5px;
  margin-left: 32px;
}

.volume button {
  width: 12px;
  height: 35px;
  border-radius: 5px;
  background: rgba(255, 255, 255, 0.8);
}

.volume .on {
  background: #4aa7ca;
}

.quality {
  width: 198px;
  height: 32px;
  font-size: 36px;
  font-weight: bold;
}
</style>
